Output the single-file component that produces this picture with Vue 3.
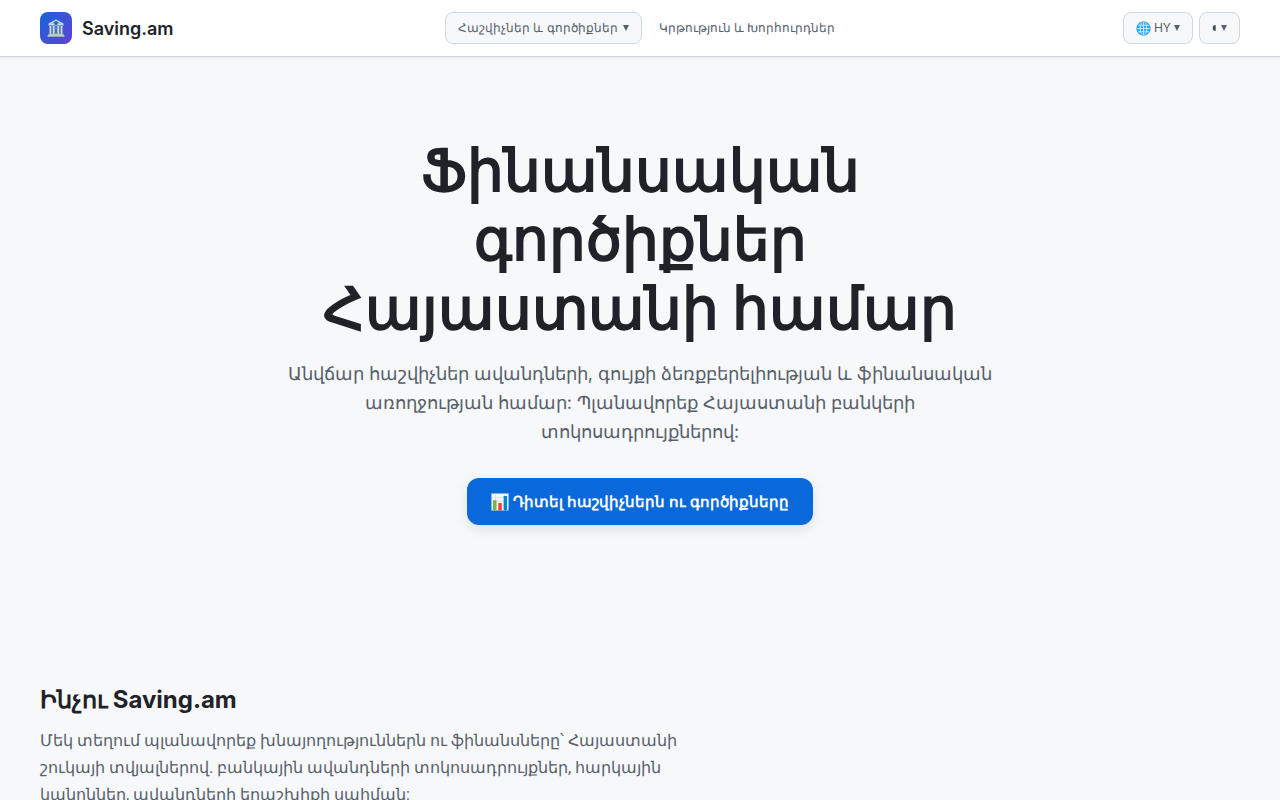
<template>
    <div class="page">
        <header class="header">
            <a href="#" class="brand">
                <span class="brand-icon">
                    <svg viewBox="0 0 20 20" width="20" height="20" aria-hidden="true">
                        <path d="M10 1.5 2.5 5.5v2h15v-2z" fill="#c9d8e2" />
                        <path d="M10 2.8 5 5.8h10z" fill="#8caebd" />
                        <circle cx="10" cy="5" r="2" fill="#1976a8" />
                        <path d="M3.5 8h2v8h-2zM7 8h1.8v8H7zM11.2 8H13v8h-1.8zM14.5 8h2v8h-2z" fill="#c9d8e2" />
                        <path d="M5.5 8H7v8H5.5zM13 8h1.5v8H13z" fill="#6087b7" />
                        <path d="M8.8 8h2.4v8H8.8z" fill="#507aac" />
                        <path d="M2.5 16h15v1.2h-15zM1.5 17.2h17v1.5h-17z" fill="#b9cad6" />
                    </svg>
                </span>
                <span class="brand-name">Saving.am</span>
            </a>

            <nav class="nav">
                <button type="button" class="pill">Հաշվիչներ և գործիքներ <span class="caret small"></span></button>
                <a href="#" class="nav-link">Կրթություն և Խորհուրդներ</a>
            </nav>

            <div class="actions">
                <button type="button" class="pill" aria-label="Լեզու">
                    <svg viewBox="0 0 16 16" width="15" height="15" aria-hidden="true">
                        <circle cx="8" cy="8" r="7.2" fill="#35a9ef" />
                        <g fill="none" stroke="#d9f1ff" stroke-width="0.9">
                            <ellipse cx="8" cy="8" rx="3.5" ry="7.1" />
                            <path d="M8 1v14M1 8h14M2 4.5h12M2 11.5h12" />
                        </g>
                        <circle cx="8" cy="8" r="7.2" fill="none" stroke="#199be5" stroke-width="0.8" />
                    </svg>
                    HY <span class="caret"></span>
                </button>
                <button type="button" class="pill theme" aria-label="Թեմա">
                    <svg viewBox="0 0 4 8" width="4" height="8" aria-hidden="true">
                        <path d="M3.7 1A3 3 0 0 0 3.7 7z" fill="#424a51" />
                    </svg>
                    <span class="caret"></span>
                </button>
            </div>
        </header>

        <main>
            <section class="hero">
                <h1>Ֆինանսական<br />գործիքներ<br />Հայաստանի համար</h1>
                <p>
                    Անվճար հաշվիչներ ավանդների, գույքի ձեռքբերելիության և ֆինանսական<br />
                    առողջության համար: Պլանավորեք Հայաստանի բանկերի<br />
                    տոկոսադրույքներով:
                </p>
                <a href="#" class="cta">
                    <svg viewBox="0 0 18 18" width="18" height="18" aria-hidden="true">
                        <rect x="0.5" y="0.5" width="17" height="17" fill="#fafafa" />
                        <path d="M.5 4.5h17M.5 8.5h17M.5 12.5h17M4.5.5v17M13.5.5v17" stroke="#cfd8dc" stroke-width="0.6" />
                        <path d="M2 7h3.5v10.5H2z" fill="#7cb342" />
                        <path d="M7.3 10h3.5v7.5H7.3z" fill="#f44336" />
                        <path d="M12.6 3h3.5v14.5h-3.5z" fill="#0288d1" />
                    </svg>
                    Դիտել հաշվիչներն ու գործիքները
                </a>
            </section>

            <section class="why">
                <h2>Ինչու Saving.am</h2>
                <p>
                    Մեկ տեղում պլանավորեք խնայողություններն ու ֆինանսները՝ Հայաստանի<br />
                    շուկայի տվյալներով. բանկային ավանդների տոկոսադրույքներ, հարկային<br />
                    կանոններ, ավանդների երաշխիքի սահման:
                </p>
            </section>
        </main>
    </div>
</template>

<script setup>
</script>

<style>
body {
    background: #f6f8fa;
}
</style>

<style scoped>
.page {
    color: #1f2328;
    font-family: Inter, serif;
}

.header {
    display: grid;
    grid-template-columns: 1fr auto 1fr;
    align-items: center;
    height: 56px;
    padding: 0 40px;
    background: #fff;
    border-bottom: 1px solid #d0d7de;
    box-shadow: 0 1px 2px rgba(0, 0, 0, 0.08);
}

.brand {
    display: flex;
    align-items: center;
    gap: 10px;
    color: #1f2328;
    text-decoration: none;
}

.brand-icon {
    display: flex;
    align-items: center;
    justify-content: center;
    width: 32px;
    height: 32px;
    border-radius: 8px;
    background: linear-gradient(135deg, #1764dc, #6042d1);
}

.brand-name {
    font-size: 18px;
    font-weight: 600;
}

.nav,
.actions {
    display: flex;
    align-items: center;
}

.nav {
    gap: 17px;
}

.actions {
    justify-content: flex-end;
    gap: 6px;
}

.pill {
    display: flex;
    align-items: center;
    gap: 3px;
    height: 32px;
    padding: 0 12px;
    border: 1px solid #d0d7de;
    border-radius: 8px;
    background: #f6f8fa;
    color: #57606a;
    font-family: inherit;
    font-size: 12px;
    line-height: 16px;
    cursor: pointer;
}

.theme {
    gap: 5px;
}

.caret {
    border: 3px solid transparent;
    border-top: 6px solid #57606a;
    border-bottom: 0;
}

.small {
    margin-left: 2px;
}

.nav-link {
    color: #57606a;
    font-size: 12px;
    line-height: 16px;
    text-decoration: none;
}

.hero {
    display: flex;
    flex-direction: column;
    align-items: center;
    padding: 79px 40px 80px;
    text-align: center;
}

h1 {
    margin: 0 0 16px;
    font-size: 58px;
    font-weight: 700;
    line-height: 69px;
}

.hero p {
    margin: 0 0 32px;
    color: #57606a;
    font-size: 18px;
    line-height: 29px;
}

.cta {
    display: flex;
    align-items: center;
    gap: 4px;
    padding: 12px 24px;
    border-radius: 12px;
    background: #0969da;
    box-shadow: 0 4px 12px rgba(0, 0, 0, 0.1);
    color: #fff;
    font-size: 15px;
    font-weight: 600;
    line-height: 23px;
    text-decoration: none;
}

.why {
    padding: 80px 40px;
}

h2 {
    margin: 0 0 12px;
    font-size: 24px;
    font-weight: 700;
    line-height: 30px;
}

.why p {
    margin: 0;
    color: #57606a;
    font-family: Roboto, serif;
    font-size: 16px;
    line-height: 27px;
}
</style>
